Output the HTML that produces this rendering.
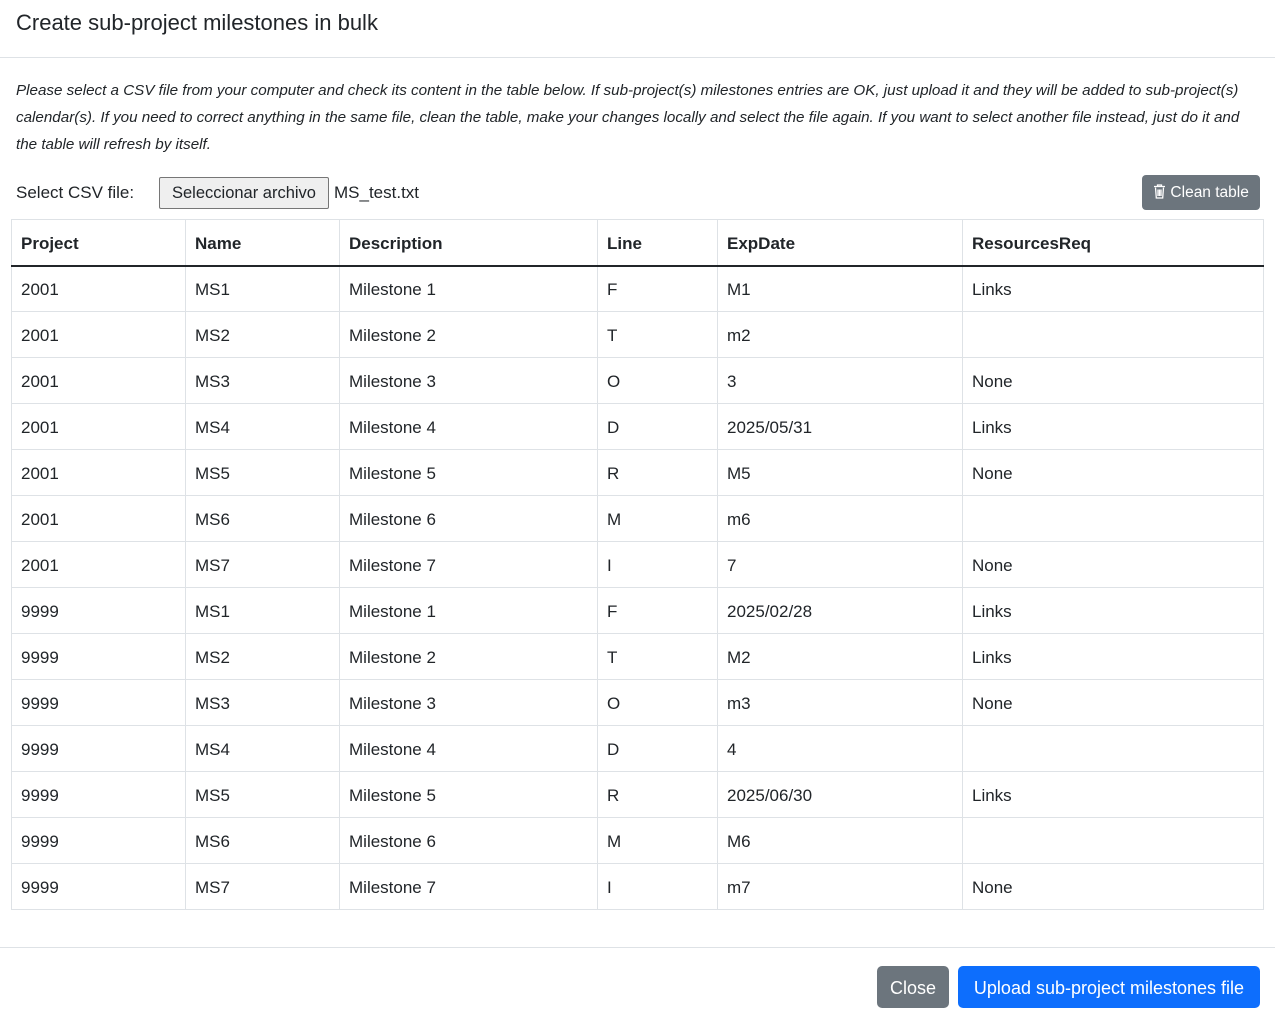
<!DOCTYPE html>
<html><head><meta charset="utf-8"><style>
*{box-sizing:border-box;margin:0;padding:0}
body{width:1275px;height:1030px;background:#fff;font-family:"Liberation Sans",sans-serif;color:#212529;position:relative;overflow:hidden}
.title{position:absolute;left:16px;top:10px;font-size:22px;font-weight:500;color:#212529}
.hr{position:absolute;left:0;right:0;height:1px;background:#dee2e6}
.p{position:absolute;left:16px;top:77px;font-style:italic;font-size:15.2px;line-height:27px;white-space:nowrap;color:#212529}
.lbl{position:absolute;left:16px;top:183px;font-size:17px}
.file{position:absolute;left:159px;top:177px;width:170px;height:32px;border:1px solid #767676;border-radius:2px;background:#efefef;font-size:16.5px;line-height:30px;text-align:center;white-space:nowrap}
.fname{position:absolute;left:334px;top:183px;font-size:17px}
.clean{position:absolute;left:1142px;top:175px;width:118px;height:35px;background:#6c757d;color:#fff;border-radius:4px;font-size:15.5px;line-height:35px;text-align:center;white-space:nowrap}
table{position:absolute;left:11px;top:219px;width:1253px;border-collapse:collapse;font-size:17px}
td,th{border:1px solid #dee2e6;padding:3px 9px 0;height:46px;text-align:left;vertical-align:middle}
th{font-weight:bold;border-bottom:2px solid #212529}
.btn{position:absolute;top:966px;height:42px;border-radius:5px;color:#fff;font-size:18px;line-height:44px;text-align:center;white-space:nowrap}
</style></head><body>
<div class="title">Create sub-project milestones in bulk</div>
<div class="hr" style="top:57px"></div>
<div class="p">Please select a CSV file from your computer and check its content in the table below. If sub-project(s) milestones entries are OK, just upload it and they will be added to sub-project(s)<br>calendar(s). If you need to correct anything in the same file, clean the table, make your changes locally and select the file again. If you want to select another file instead, just do it and<br>the table will refresh by itself.</div>
<div class="lbl">Select CSV file:</div>
<div class="file">Seleccionar archivo</div>
<div class="fname">MS_test.txt</div>
<div class="clean"><svg width="13" height="15" viewBox="0 0 13 15" style="vertical-align:-2px"><path d="M1 2.5h11M4.5 2.5V1h4v1.5M2.5 3.5l.8 10.5h6.4l.8-10.5M5 5.5v6.5M6.5 5.5v6.5M8 5.5v6.5" fill="none" stroke="#fff" stroke-width="1.3"/></svg> Clean table</div>
<table>
<colgroup><col style="width:174px"><col style="width:154px"><col style="width:258px"><col style="width:120px"><col style="width:245px"><col></colgroup>
<tr><th>Project</th><th>Name</th><th>Description</th><th>Line</th><th>ExpDate</th><th>ResourcesReq</th></tr>
<tr><td>2001</td><td>MS1</td><td>Milestone 1</td><td>F</td><td>M1</td><td>Links</td></tr>
<tr><td>2001</td><td>MS2</td><td>Milestone 2</td><td>T</td><td>m2</td><td></td></tr>
<tr><td>2001</td><td>MS3</td><td>Milestone 3</td><td>O</td><td>3</td><td>None</td></tr>
<tr><td>2001</td><td>MS4</td><td>Milestone 4</td><td>D</td><td>2025/05/31</td><td>Links</td></tr>
<tr><td>2001</td><td>MS5</td><td>Milestone 5</td><td>R</td><td>M5</td><td>None</td></tr>
<tr><td>2001</td><td>MS6</td><td>Milestone 6</td><td>M</td><td>m6</td><td></td></tr>
<tr><td>2001</td><td>MS7</td><td>Milestone 7</td><td>I</td><td>7</td><td>None</td></tr>
<tr><td>9999</td><td>MS1</td><td>Milestone 1</td><td>F</td><td>2025/02/28</td><td>Links</td></tr>
<tr><td>9999</td><td>MS2</td><td>Milestone 2</td><td>T</td><td>M2</td><td>Links</td></tr>
<tr><td>9999</td><td>MS3</td><td>Milestone 3</td><td>O</td><td>m3</td><td>None</td></tr>
<tr><td>9999</td><td>MS4</td><td>Milestone 4</td><td>D</td><td>4</td><td></td></tr>
<tr><td>9999</td><td>MS5</td><td>Milestone 5</td><td>R</td><td>2025/06/30</td><td>Links</td></tr>
<tr><td>9999</td><td>MS6</td><td>Milestone 6</td><td>M</td><td>M6</td><td></td></tr>
<tr><td>9999</td><td>MS7</td><td>Milestone 7</td><td>I</td><td>m7</td><td>None</td></tr>
</table>
<div class="hr" style="top:947px"></div>
<div class="btn" style="left:877px;width:72px;background:#6c757d">Close</div>
<div class="btn" style="left:958px;width:302px;background:#0d6efd">Upload sub-project milestones file</div>
</body></html>
